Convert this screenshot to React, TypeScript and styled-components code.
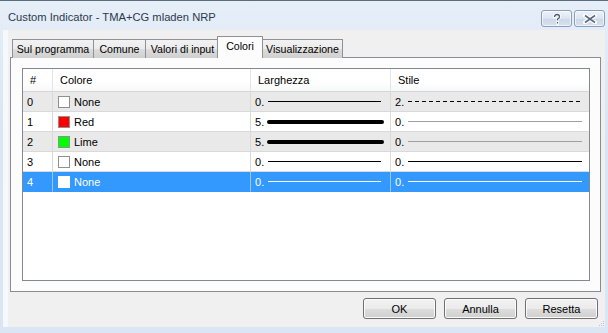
import React from 'react';
import styled, { createGlobalStyle, css } from 'styled-components';

const GlobalStyle = createGlobalStyle`
    html, body {
        margin: 0;
        padding: 0;
        background: #dfe9f5;
    }
    body {
        font-family: 'Liberation Sans', Arial, sans-serif;
        font-size: 11px;
        color: #000;
    }
`;

const Window = styled.div`
    width: 608px;
    height: 333px;
    box-sizing: border-box;
    border-top: 1px solid #5d6b7a;
    background: linear-gradient(to bottom, #e6eef8 0%, #d9e5f3 40%, #dbe6f4 100%);
    display: flex;
    flex-direction: column;
`;

const TitleBar = styled.div`
    height: 29px;
    display: flex;
    align-items: flex-start;
    padding: 0 3px 0 8px;
`;

const Title = styled.div`
    flex: 1;
    font-family: 'Liberation Sans', Arial, sans-serif;
    font-size: 11.2px;
    color: #2a3a4c;
    padding-top: 10px;
`;

const CaptionButton = styled.div<{ $w: number }>`
    width: ${p => p.$w}px;
    height: 17px;
    box-sizing: border-box;
    margin: 9px 0 0 2px;
    border: 1px solid #8b9fb8;
    border-radius: 3px;
    background: linear-gradient(to bottom, #eef3f9 0%, #dbe5f1 50%, #cbd8e8 51%, #d6e1ee 100%);
    box-shadow: inset 0 0 0 1px rgba(255, 255, 255, 0.6);
    display: flex;
    align-items: center;
    justify-content: center;
`;

const Client = styled.div`
    flex: 1;
    margin: 0 3px 6px 8px;
    background: #f0f0f0;
    box-shadow: -5px 0 0 #f6f9fc;
    display: flex;
    flex-direction: column;
`;

const TabStrip = styled.div`
    display: flex;
    align-items: flex-end;
    height: 28px;
    padding-left: 4px;
    margin-bottom: -1px;
    position: relative;
    z-index: 1;
`;

const Tab = styled.div<{ $active?: boolean; $w: number }>`
    width: ${p => p.$w}px;
    height: 19px;
    box-sizing: border-box;
    display: flex;
    align-items: center;
    justify-content: center;
    font-size: 10.6px;
    border: 1px solid #8e9197;
    border-bottom: none;
    margin-right: -1px;
    background: linear-gradient(to bottom, #f2f2f2 0%, #ebebeb 50%, #dddddd 51%, #cfcfcf 100%);
    white-space: nowrap;
    ${p => p.$active && css`
        height: 22px;
        margin: 0 -1px 0 -2px;
        padding-bottom: 3px;
        background: #fcfcfc;
        position: relative;
        z-index: 2;
    `}
`;

const Panel = styled.div`
    margin: 0 4px 0 2px;
    height: 235px;
    box-sizing: border-box;
    border: 1px solid #898c95;
    background: #fcfcfc;
    padding: 10px 10px 10px 11px;
`;

const List = styled.div`
    height: 100%;
    box-sizing: border-box;
    border: 1px solid #828790;
    background: #fff;
`;

const Grid = styled.div`
    display: grid;
    grid-template-columns: 30px 198px 140px 1fr;
`;

const HeadCell = styled.div<{ $last?: boolean }>`
    height: 23px;
    box-sizing: border-box;
    display: flex;
    align-items: center;
    padding-left: 7px;
    background: linear-gradient(to bottom, #ffffff 0%, #ffffff 60%, #f7f8f9 100%);
    border-bottom: 1px solid #d5d5d5;
    border-right: 1px solid ${p => (p.$last ? 'transparent' : '#e3e4e6')};
`;

const Cell = styled.div<{ $tone: 'gray' | 'white' | 'sel'; $last?: boolean }>`
    height: 20px;
    box-sizing: border-box;
    display: flex;
    align-items: center;
    padding-left: 4px;
    border-bottom: 1px solid #d9d9d9;
    border-right: 1px solid ${p => (p.$last ? 'transparent' : '#d9d9d9')};
    background: ${p => (p.$tone === 'gray' ? '#e9e9e9' : p.$tone === 'sel' ? '#3399ff' : '#ffffff')};
    color: ${p => (p.$tone === 'sel' ? '#ffffff' : '#000000')};
    ${p => p.$tone === 'sel' && css`
        border-bottom-color: #3399ff;
        border-right-color: ${p.$last ? '#3399ff' : '#9cc7f2'};
    `}
`;

const Swatch = styled.span<{ $color: string; $sel?: boolean }>`
    width: 12px;
    height: 12px;
    box-sizing: border-box;
    margin: 0 4px 0 1px;
    background: ${p => p.$color};
    border: 1px solid ${p => (p.$sel ? '#ffffff' : '#8f8f8f')};
`;

const Num = styled.span`
    width: 12px;
    flex: none;
`;

const Line = styled.span<{ $color: string; $thick?: boolean; $dashed?: boolean; $right: number }>`
    flex: 1;
    margin: 0 ${p => p.$right}px 0 ${p => (p.$thick ? 0 : 1)}px;
    height: ${p => (p.$thick ? 4 : 1)}px;
    border-radius: ${p => (p.$thick ? 2 : 0)}px;
    background: ${p => p.$color};
    ${p => p.$dashed && css`
        background: repeating-linear-gradient(to right, ${p.$color} 0 4px, transparent 4px 7px);
    `}
`;

const ButtonRow = styled.div`
    display: flex;
    justify-content: flex-end;
    gap: 8px;
    padding: 6px 7px 0 0;
    position: relative;
    flex: 1;
`;

const PushButton = styled.div`
    width: 73px;
    height: 21px;
    box-sizing: border-box;
    border: 1px solid #707070;
    border-radius: 3px;
    background: linear-gradient(to bottom, #f2f2f2 0%, #ebebeb 50%, #dddddd 51%, #cfcfcf 100%);
    box-shadow: inset 0 0 0 1px #fbfbfb;
    display: flex;
    align-items: center;
    justify-content: center;
`;

const Grip = styled.svg`
    position: absolute;
    right: 0;
    bottom: 0;
`;

type Row = {
    color: string;
    name: string;
    width: number;
    style: number;
    styleColor: string;
};

const rows: Row[] = [
    { color: '#ffffff', name: 'None', width: 0, style: 2, styleColor: '#000000' },
    { color: '#ff0000', name: 'Red', width: 5, style: 0, styleColor: '#a0a0a0' },
    { color: '#00ff00', name: 'Lime', width: 5, style: 0, styleColor: '#a0a0a0' },
    { color: '#ffffff', name: 'None', width: 0, style: 0, styleColor: '#000000' },
    { color: '#ffffff', name: 'None', width: 0, style: 0, styleColor: '#ffffff' },
];

const tabs = [
    { label: 'Sul programma', w: 82 },
    { label: 'Comune', w: 53 },
    { label: 'Valori di input', w: 75 },
    { label: 'Colori', w: 46, active: true },
    { label: 'Visualizzazione', w: 81 },
];

const HelpGlyph = () => (
    <svg width="12" height="12" viewBox="0 0 12 12">
        <path d="M3.5 4 Q3.5 1.5 6 1.5 Q8.5 1.5 8.5 3.8 Q8.5 5.3 6.5 6.2 L6.5 7.5 M6.5 9 L6.5 10.5"
            fill="none" stroke="#ffffff" strokeWidth="3" strokeLinecap="round" />
        <path d="M3.5 4 Q3.5 1.5 6 1.5 Q8.5 1.5 8.5 3.8 Q8.5 5.3 6.5 6.2 L6.5 7.5 M6.5 9 L6.5 10.5"
            fill="none" stroke="#4d5d72" strokeWidth="1.3" />
    </svg>
);

const CloseGlyph = () => (
    <svg width="14" height="10" viewBox="0 0 14 10">
        <path d="M2 1.5 L12 8.5 M12 1.5 L2 8.5" stroke="#ffffff" strokeWidth="4" strokeLinecap="round" />
        <path d="M2 1.5 L12 8.5 M12 1.5 L2 8.5" stroke="#5a6a80" strokeWidth="1.6" />
    </svg>
);

export default function App() {
    return (
        <>
            <GlobalStyle />
            <Window>
                <TitleBar>
                    <Title>Custom Indicator - TMA+CG mladen NRP</Title>
                    <CaptionButton $w={31}><HelpGlyph /></CaptionButton>
                    <CaptionButton $w={31}><CloseGlyph /></CaptionButton>
                </TitleBar>
                <Client>
                    <TabStrip>
                        {tabs.map(t => (
                            <Tab key={t.label} $w={t.w} $active={t.active}>{t.label}</Tab>
                        ))}
                    </TabStrip>
                    <Panel>
                        <List>
                            <Grid>
                                <HeadCell>#</HeadCell>
                                <HeadCell>Colore</HeadCell>
                                <HeadCell>Larghezza</HeadCell>
                                <HeadCell $last>Stile</HeadCell>
                                {rows.map((r, i) => {
                                    const tone = i === 4 ? 'sel' : i % 2 === 0 ? 'gray' : 'white';
                                    const sel = tone === 'sel';
                                    const ink = sel ? '#ffffff' : '#000000';
                                    return (
                                        <React.Fragment key={i}>
                                            <Cell $tone={tone}>{i}</Cell>
                                            <Cell $tone={tone}>
                                                <Swatch $color={r.color} $sel={sel} />
                                                {r.name}
                                            </Cell>
                                            <Cell $tone={tone}>
                                                <Num>{r.width}.</Num>
                                                <Line $color={ink} $thick={r.width > 0} $right={r.width > 0 ? 6 : 9} />
                                            </Cell>
                                            <Cell $tone={tone} $last>
                                                <Num>{r.style}.</Num>
                                                <Line $color={r.styleColor} $dashed={r.style === 2} $right={6} />
                                            </Cell>
                                        </React.Fragment>
                                    );
                                })}
                            </Grid>
                        </List>
                    </Panel>
                    <ButtonRow>
                        <PushButton>OK</PushButton>
                        <PushButton>Annulla</PushButton>
                        <PushButton>Resetta</PushButton>
                        <Grip width="8" height="8" viewBox="0 0 8 8">
                            <rect x="6" y="2" width="1" height="1" fill="#b9c3cf" />
                            <rect x="4" y="4" width="1" height="1" fill="#b9c3cf" />
                            <rect x="6" y="4" width="1" height="1" fill="#b9c3cf" />
                            <rect x="2" y="6" width="1" height="1" fill="#b9c3cf" />
                            <rect x="4" y="6" width="1" height="1" fill="#b9c3cf" />
                            <rect x="6" y="6" width="1" height="1" fill="#b9c3cf" />
                        </Grip>
                    </ButtonRow>
                </Client>
            </Window>
        </>
    );
}
